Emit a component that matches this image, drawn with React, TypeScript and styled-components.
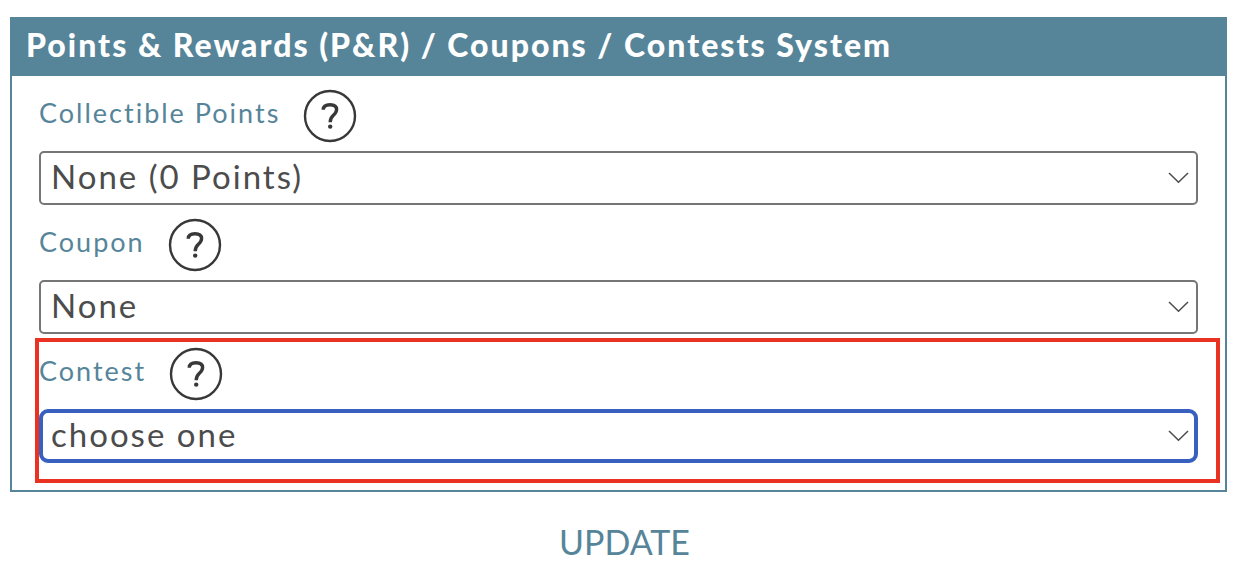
import React from "react";
import styled, { createGlobalStyle } from "styled-components";

const teal = "#56859a";

const GlobalStyle = createGlobalStyle`
  *, *::before, *::after { box-sizing: border-box; }
  body {
    margin: 0;
    background: #fff;
    color: #4c4c4c;
    font-family: Lato, "Liberation Sans", sans-serif;
  }
`;

const Form = styled.form`
  padding: 17px 17px 0 10px;
`;

const Title = styled.h2`
  margin: 0;
  padding: 8px 16px 11px;
  background: ${teal};
  color: #fff;
  font-size: 32px;
  font-weight: 900;
  line-height: 40px;
  letter-spacing: 2px;
`;

const Panel = styled.div`
  padding: 0 27px 27px;
  border: 2px solid ${teal};
  border-top: 0;
  letter-spacing: 2px;
`;

const Field = styled.div<{ $highlighted?: boolean }>`
  position: relative;

  ${({ $highlighted }) =>
    $highlighted &&
    `&::after {
      content: "";
      position: absolute;
      inset: 4px -22px -20px -4px;
      border: 4px solid #ea3223;
      pointer-events: none;
    }`}
`;

const LabelRow = styled.div`
  display: flex;
  align-items: center;
  gap: 23px;
  height: 75px;
  padding-top: 5px;
`;

const Label = styled.label`
  padding-bottom: 6px;
  color: ${teal};
  font-size: 27px;
  line-height: 32px;
`;

const HelpButton = styled.button`
  display: flex;
  padding: 0;
  border: 0;
  background: none;
  cursor: pointer;
`;

const SelectWrap = styled.div`
  position: relative;
`;

const Select = styled.select<{ $active?: boolean }>`
  display: block;
  width: 100%;
  height: 54px;
  padding: 0 ${({ $active }) => ($active ? 8 : 10)}px 4px;
  border: ${({ $active }) => ($active ? "4px solid #3860be" : "2px solid #767676")};
  border-radius: ${({ $active }) => ($active ? 9 : 5)}px;
  outline: 0;
  background: #fff;
  color: #4c4c4c;
  font-family: inherit;
  font-size: 33px;
  letter-spacing: inherit;
  appearance: none;
`;

const Chevron = styled.svg`
  position: absolute;
  top: 20px;
  right: 9px;
  pointer-events: none;
`;

const Actions = styled.div`
  display: flex;
  justify-content: center;
  padding: 28px 0 0 12px;
`;

const UpdateButton = styled.button`
  padding: 0;
  border: 0;
  background: none;
  color: ${teal};
  font-family: inherit;
  font-size: 34px;
  line-height: 44px;
  cursor: pointer;
`;

function HelpIcon() {
  return (
    <svg width="54" height="54" viewBox="0 0 54 54" fill="none" stroke="#383838" aria-hidden="true">
      <circle cx="27" cy="27" r="25" strokeWidth="2.4" />
      <path
        d="M20.2 20.8C20.3 17.3 23 15.8 27 15.8C31 15.8 33.6 17.5 33.6 20.6C33.6 23 32.4 24.4 30.4 26.2C28.2 28.2 27.2 29.4 27.2 33.2"
        strokeWidth="3.4"
      />
      <circle cx="27.2" cy="37.6" r="2.2" fill="#383838" stroke="none" />
    </svg>
  );
}

interface SelectFieldProps {
  id: string;
  label: string;
  option: string;
  active?: boolean;
}

function SelectField({ id, label, option, active }: SelectFieldProps) {
  return (
    <Field $highlighted={active}>
      <LabelRow>
        <Label htmlFor={id}>{label}</Label>
        <HelpButton type="button" aria-label={`Help: ${label}`}>
          <HelpIcon />
        </HelpButton>
      </LabelRow>
      <SelectWrap>
        <Select id={id} $active={active}>
          <option>{option}</option>
        </Select>
        <Chevron width="21" height="14" viewBox="0 0 21 14" fill="none" stroke="#4c4c4c" strokeWidth="1.5" aria-hidden="true">
          <path d="M1 2L10.5 11.3L20 2" />
        </Chevron>
      </SelectWrap>
    </Field>
  );
}

export default function App() {
  return (
    <>
      <GlobalStyle />
      <Form onSubmit={(event) => event.preventDefault()}>
        <Title>Points &amp; Rewards (P&amp;R) / Coupons / Contests System</Title>
        <Panel>
          <SelectField id="points" label="Collectible Points" option="None (0 Points)" />
          <SelectField id="coupon" label="Coupon" option="None" />
          <SelectField id="contest" label="Contest" option="choose one" active />
        </Panel>
        <Actions>
          <UpdateButton type="submit">UPDATE</UpdateButton>
        </Actions>
      </Form>
    </>
  );
}
